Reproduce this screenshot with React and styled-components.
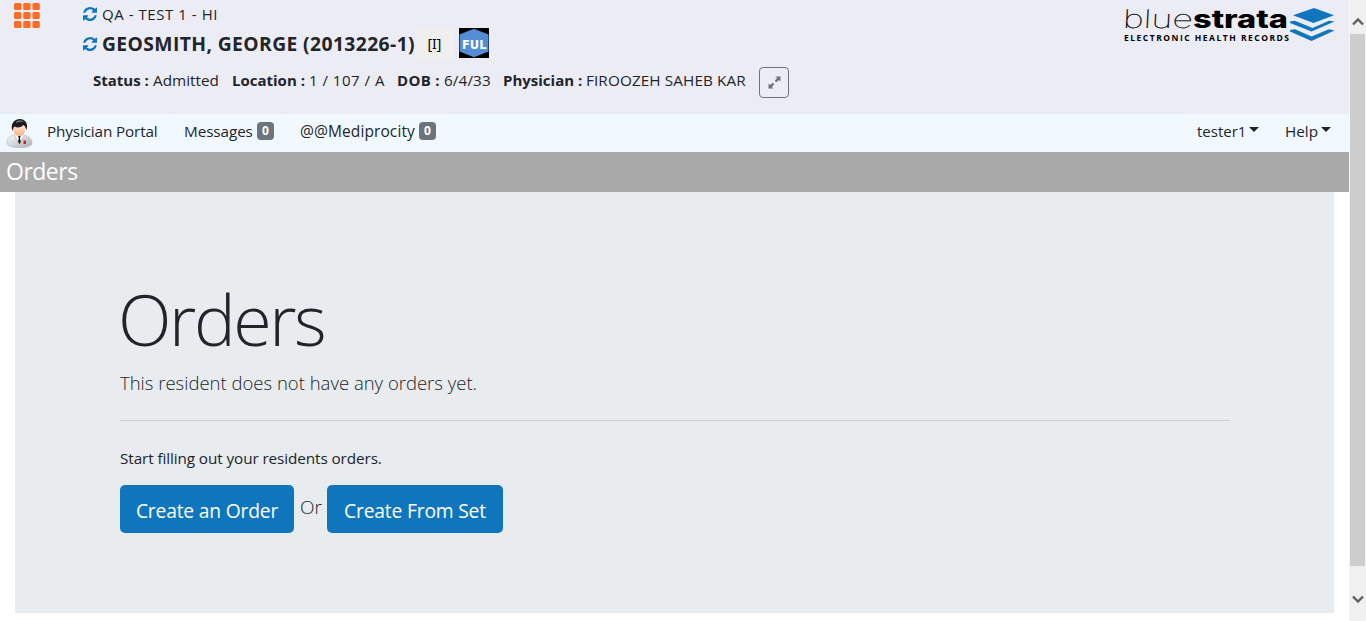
import React from "react";
import styled, { createGlobalStyle } from "styled-components";

const Global = createGlobalStyle`
  * { box-sizing: border-box; }
  body { margin: 0; background: #fff; color: #212529; font-family: "Open Sans", "Noto Sans", sans-serif; font-size: 15px; overflow: hidden; }
  h1, h2, p { margin: 0; font-weight: 400; }
`;

const Shell = styled.div`display: flex; width: 1366px; height: 621px;`;
const Page = styled.div`width: 1349px; height: 621px; display: flex; flex-direction: column;`;

const Header = styled.header`height: 114px; background: #ececf5; display: flex; flex: none;`;
const AppsCell = styled.div`width: 83px; padding: 3px 0 0 14px; flex: none;`;
const Resident = styled.div`flex: 1; display: flex; flex-direction: column;`;
const Row = styled.div`display: flex; align-items: center; height: ${(p) => p.$h}px; padding-left: ${(p) => p.$pl || 0}px; margin-top: ${(p) => p.$mt || 0}px;`;
const Label = styled.span`
  white-space: nowrap; flex: none; display: block;
  width: ${(p) => (p.$w ? p.$w + "px" : "auto")};
  font-size: ${(p) => p.$size || 15}px;
  font-weight: ${(p) => p.$weight || 400};
  letter-spacing: ${(p) => p.$ls || 0}px;
`;
const InitialBox = styled.span`
  width: 39px; height: 33px; border-radius: 4px; background: #efefef; color: #000;
  display: flex; align-items: center; justify-content: center; margin-right: 5px;
  font-family: "Noto Sans", sans-serif; font-size: 14px;
`;
const ExpandButton = styled.button`
  width: 30px; height: 31px; padding: 0; border: 1px solid #6c757d; border-radius: 4px; background: transparent;
  display: flex; align-items: center; justify-content: center; margin-top: 5px;
`;
const LogoCell = styled.div`width: 229px; padding: 4px 0 0 2px; flex: none;`;

const Nav = styled.nav`height: 38px; background: #f0f8ff; display: flex; flex: none; padding: 0 4px 0 5px;`;
const Avatar = styled.div`width: 29px; padding-top: 4px;`;
const NavItem = styled.a`
  height: 33px; width: ${(p) => p.$w}px; padding-left: 12px; border: 1px solid #f4f9fd; border-radius: 4px; background: #f1f9ff;
  display: flex; align-items: center; margin-right: 2px;
`;
const Badge = styled.span`
  width: 17px; height: 18px; border-radius: 4px; background: #6c757d; color: #fff; font-size: 12px; font-weight: 700;
  display: flex; align-items: center; justify-content: center;
`;
const Caret = styled.span`border: 5px solid transparent; border-top-color: #212529; border-bottom: 0; margin-top: -2px;`;
const Spacer = styled.div`flex: 1;`;

const TitleBar = styled.h2`
  height: 40px; flex: none; background: #a9a9a9; color: #fff; font-size: 23px; line-height: 38px; padding-left: 6px;
  letter-spacing: -0.5px;
`;
const Jumbotron = styled.main`margin: 0 15px; height: 421px; background: #e8ecef; padding: 84px 104px 0 105px;`;
const Display = styled.h1`font-size: 70px; font-weight: 300; line-height: 86px; letter-spacing: -2.4px; margin-left: -2px;`;
const Lead = styled.p`font-size: 18.5px; font-weight: 300; line-height: 28px; margin-top: 7px; letter-spacing: 0;`;
const Rule = styled.div`height: 1px; background: #cdd1d5; margin: 23px 0 24px;`;
const Note = styled.p`font-size: 15.300px; line-height: 26px; letter-spacing: -0.1px;`;
const Actions = styled.div`display: flex; margin-top: 14px;`;
const Primary = styled.button`
  width: ${(p) => p.$w}px; height: 48px; border: 0; border-radius: 5px; background: #0f76be; color: #fff; padding: 3px 0 0;
  font-family: inherit; font-size: 19.300px; white-space: nowrap; letter-spacing: -0.2px;
`;
const Or = styled.span`width: 33px; padding-left: 1px; text-align: center; font-size: 19px; font-weight: 300; line-height: 44px;`;

const Scroll = styled.div`width: 17px; background: #f0f0f0; display: flex; flex-direction: column; align-items: center; border-left: 1px solid #f6f6f6;`;
const ScrollArrow = styled.div`height: ${(p) => p.$h}px; padding-top: ${(p) => p.$pt}px; display: flex; align-items: center; justify-content: center;`;
const Thumb = styled.div`width: 15px; height: 532px; margin-right: 1px; background: #cdcdcd;`;

const Grid = () => (
  <svg width="26" height="25" viewBox="0 0 26 25" fill="#ff6b22" style={{ display: "block" }}>
    {[0, 9, 18].map((y) => [0, 9.2, 18.4].map((x) => <rect key={x + "-" + y} x={x} y={y} width="7.4" height="7" rx="1.5" />))}
  </svg>
);

const Refresh = styled.svg.attrs({
  viewBox: "0 0 1536 1536",
  children: (
    <path d="M1511 928q0 5-1 7-64 268-268 434.500t-478 166.500q-146 0-282.500-55t-243.500-157l-129 129q-19 19-45 19t-45-19-19-45v-448q0-26 19-45t45-19h448q26 0 45 19t19 45-19 45l-137 137q71 66 161 102t187 36q134 0 250-65t186-179q11-17 53-117 8-23 30-23h192q13 0 22.500 9.500t9.500 22.500zM1536 128v448q0 26-19 45t-45 19h-448q-26 0-45-19t-19-45 19-45l138-138q-148-137-349-137-134 0-250 65t-186 179q-11 17-53 117-8 23-30 23h-199q-13 0-22.500-9.500t-9.500-22.500v-7q65-268 270-434.500t480-166.500q146 0 284 55.500t245 156.500l130-129q19-19 45-19t45 19 19 45z" />
  ),
})`width: 14px; height: 14px; fill: #0f76be; margin-right: 5px; flex: none;`;

const CodeStatusIcon = styled.svg`width: 30px; height: 30px; margin-bottom: 2px;`;
const CodeStatus = () => (
  <CodeStatusIcon viewBox="0 0 30 30">
    <rect width="30" height="30" fill="#000" />
    <path d="M15 0.7L29.5 6.5V23.5L15 29.3L0.5 23.5V6.5Z" fill="#538dd5" />
    <text x="3" y="21" fontFamily="DejaVu Sans, sans-serif" fontSize="12" fontWeight="700" fill="#fff" textLength="24.5" lengthAdjust="spacingAndGlyphs">FUL</text>
  </CodeStatusIcon>
);

const Expand = () => (
  <svg width="13" height="13" viewBox="0 0 13 13" fill="#6c757d">
    <path d="M7.500 0.5H12.5V5.5L10.900 3.900L8.300 6.300L6.700 4.700L9.100 2.100ZM0.5 12.5V7.5L2.100 9.100L4.700 6.700L6.300 8.300L3.900 10.900L5.500 12.5Z" />
  </svg>
);

const Logo = () => (
  <svg width="214" height="42" viewBox="1122 4 214 42">
    <g transform="translate(1122.500 28) skewX(-3)">
      <text x="0" y="0" fontFamily="Inter, sans-serif" fontSize="25.500" fontWeight="100" stroke="#000" strokeWidth="0.25" textLength="70" lengthAdjust="spacingAndGlyphs">blue</text>
    </g>
    <text x="1193" y="28" fontFamily="Inter, sans-serif" fontSize="24.500" fontWeight="800" textLength="95" lengthAdjust="spacingAndGlyphs">strata</text>
    <text x="1124" y="41" fontFamily="Open Sans, sans-serif" fontSize="8.500" fontWeight="700" textLength="165" lengthAdjust="spacing">ELECTRONIC HEALTH RECORDS</text>
    <g fill="#0f76be">
      <path d="M1314 8L1334 15.300L1313.500 23L1293 15.300Z" />
      <path d="M1290 21.500L1295 20.800L1312.500 28L1329 20.800L1334.500 21.500L1311.500 31.500L1290 23Z" />
      <path d="M1290 30L1295 29.300L1311.500 36.500L1329 29.300L1334.500 30.500L1311.500 41L1290 31.500Z" />
    </g>
  </svg>
);

const Doctor = () => (
  <svg width="28" height="30" viewBox="0 0 28 30">
    <defs>
      <linearGradient id="coat" x1="0" y1="0" x2="1" y2="1">
        <stop offset="0" stopColor="#fafafa" /><stop offset="1" stopColor="#a9adb1" />
      </linearGradient>
      <linearGradient id="skin" x1="0" y1="0" x2="0" y2="1">
        <stop offset="0" stopColor="#fff4ea" /><stop offset="1" stopColor="#f5ae80" />
      </linearGradient>
    </defs>
    <path d="M2 25C2 19 5 18 10 17H18C24 18 27 20 27 26C25 31 5 31 2 26Z" fill="url(#coat)" stroke="#b8bcc0" strokeWidth="0.6" />
    <path d="M10 17L14.500 24L18.500 17Z" fill="#fff" />
    <path d="M13.200 18H15.600L15 20.500L15.800 24L14.500 26L13.100 24L13.800 20.500Z" fill="#111" />
    <ellipse cx="14.300" cy="11.500" rx="6.200" ry="6.600" fill="url(#skin)" />
    <path d="M7.500 13C5 6 9 1 15 1C20.500 1 23.500 6 21.500 12C20.500 10 20.500 8 18.500 7C15 10 12 10 9.500 8.500C8.500 9.500 8 11 7.500 13Z" fill="#1c1c1e" />
    <path d="M11 3.500C14 1.500 17 2 19 4C16 4 14 3.800 11 5Z" fill="#666" />
    <path d="M9 17L13.500 26M19.500 17L15.500 26" stroke="#c4c7ca" strokeWidth="0.8" />
    <rect x="18.500" y="22.500" width="2.400" height="3.500" fill="#d3161b" />
  </svg>
);

const Chevron = ({ down }) => (
  <svg width="12" height="9" viewBox="0 0 12 9" fill="none" stroke="#606060" strokeWidth="2.400">
    <path d={down ? "M1 1.500L6 6.500L11 1.500" : "M1 7.500L6 2.500L11 7.500"} />
  </svg>
);

export default function App() {
  return (
    <>
      <Global />
      <Shell>
        <Page>
          <Header>
            <AppsCell><Grid /></AppsCell>
            <Resident>
              <Row $h={28}><Refresh /><Label $size={15} $ls={0.55}>QA - TEST 1 - HI</Label></Row>
              <Row $h={31}>
                <Refresh />
                <Label $w={313} $size={19.3} $weight={700} $ls={0.4}>GEOSMITH, GEORGE (2013226-1)</Label>
                <InitialBox>[I]</InitialBox>
                <CodeStatus />
              </Row>
              <Row $h={39} $mt={1} $pl={10}>
                <Label $w={60} $weight={700}>Status :</Label>
                <Label $w={79} $size={15.3}>Admitted</Label>
                <Label $w={77} $weight={700}>Location :</Label>
                <Label $w={88} $ls={0.5}>1 / 107 / A</Label>
                <Label $w={47} $weight={700} $ls={0.3}>DOB :</Label>
                <Label $w={59} $size={15.3} $ls={0.1}>6/4/33</Label>
                <Label $w={83} $weight={700}>Physician :</Label>
                <Label $w={173} $size={15.3} $ls={0.1}>FIROOZEH SAHEB KAR</Label>
                <ExpandButton aria-label="Expand"><Expand /></ExpandButton>
              </Row>
            </Resident>
            <LogoCell><Logo /></LogoCell>
          </Header>
          <Nav>
            <Avatar><Doctor /></Avatar>
            <NavItem $w={135}><Label $size={15.3} $ls={-0.15}>Physician Portal</Label></NavItem>
            <NavItem $w={114}><Label $w={73} $size={15.3} $ls={-0.1}>Messages</Label><Badge>0</Badge></NavItem>
            <NavItem $w={161}><Label $w={119} $size={15.5} $ls={0.1}>@@Mediprocity</Label><Badge>0</Badge></NavItem>
            <Spacer />
            <NavItem $w={86}><Label $w={52}>tester1</Label><Caret /></NavItem>
            <NavItem $w={71}><Label $w={36} $size={15.3}>Help</Label><Caret /></NavItem>
          </Nav>
          <TitleBar>Orders</TitleBar>
          <Jumbotron>
            <Display>Orders</Display>
            <Lead>This resident does not have any orders yet.</Lead>
            <Rule />
            <Note>Start filling out your residents orders.</Note>
            <Actions>
              <Primary $w={174}>Create an Order</Primary>
              <Or>Or</Or>
              <Primary $w={176}>Create From Set</Primary>
            </Actions>
          </Jumbotron>
        </Page>
        <Scroll>
          <ScrollArrow $h={34} $pt={8}><Chevron /></ScrollArrow>
          <Thumb />
          <ScrollArrow $h={55} $pt={12}><Chevron down /></ScrollArrow>
        </Scroll>
      </Shell>
    </>
  );
}
